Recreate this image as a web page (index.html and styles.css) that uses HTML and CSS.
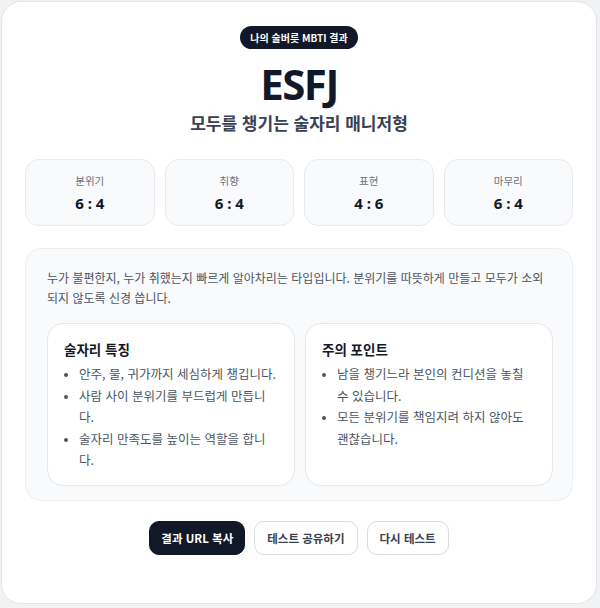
FILE: index.html
```html
<!DOCTYPE html>
<html lang="ko">
<head>
<meta charset="utf-8">
<title>나의 술버릇 MBTI 결과</title>
<link rel="stylesheet" href="styles.css">
</head>
<body>
<main class="card">
  <header class="hero">
    <span class="badge">나의 술버릇 MBTI 결과</span>
    <h1 class="type">ESFJ</h1>
    <p class="subtitle">모두를 챙기는 술자리 매니저형</p>
  </header>

  <section class="stats">
    <div class="stat"><span class="stat-label">분위기</span><span class="stat-value">6 : 4</span></div>
    <div class="stat"><span class="stat-label">취향</span><span class="stat-value">6 : 4</span></div>
    <div class="stat"><span class="stat-label">표현</span><span class="stat-value">4 : 6</span></div>
    <div class="stat"><span class="stat-label">마무리</span><span class="stat-value">6 : 4</span></div>
  </section>

  <section class="detail">
    <p class="desc">누가 불편한지, 누가 취했는지 빠르게 알아차리는 타입입니다. 분위기를 따뜻하게 만들고 모두가 소외되지 않도록 신경 씁니다.</p>
    <div class="points">
      <div class="point">
        <h2 class="point-title">술자리 특징</h2>
        <ul class="point-list">
          <li>안주, 물, 귀가까지 세심하게 챙깁니다.</li>
          <li>사람 사이 분위기를 부드럽게 만듭니다.</li>
          <li>술자리 만족도를 높이는 역할을 합니다.</li>
        </ul>
      </div>
      <div class="point">
        <h2 class="point-title">주의 포인트</h2>
        <ul class="point-list">
          <li>남을 챙기느라 본인의 컨디션을 놓칠 수 있습니다.</li>
          <li>모든 분위기를 책임지려 하지 않아도 괜찮습니다.</li>
        </ul>
      </div>
    </div>
  </section>

  <nav class="actions">
    <button class="btn btn-primary" type="button">결과 URL 복사</button>
    <button class="btn" type="button">테스트 공유하기</button>
    <button class="btn" type="button">다시 테스트</button>
  </nav>
</main>
</body>
</html>
```

FILE: styles.css
```css
* { box-sizing: border-box; }
html, body {
  margin: 0;
  padding: 0;
  background: #f1f2f4;
}
body {
  font-family: "Noto Sans CJK KR", "Noto Sans", sans-serif;
  color: #111827;
}
.card {
  width: 596px;
  height: 603px;
  margin: 1px 0 0 1px;
  background: #ffffff;
  border: 1px solid #e3e5e8;
  border-radius: 20px;
  padding: 24px 23px 0;
}
.hero {
  display: flex;
  flex-direction: column;
  align-items: center;
}
.badge {
  display: inline-block;
  background: #111827;
  color: #ffffff;
  font-size: 10px;
  font-weight: 700;
  line-height: 13px;
  padding: 5px 10px;
  border-radius: 999px;
}
.type {
  margin: 10px 0 0;
  font-family: "Noto Sans", sans-serif;
  font-size: 42px;
  font-weight: 700;
  line-height: 50px;
  letter-spacing: -1.5px;
  color: #111827;
}
.subtitle {
  margin: 2px 0 0;
  font-size: 17px;
  font-weight: 700;
  line-height: 24px;
  color: #374151;
}
.stats {
  margin-top: 24px;
  display: grid;
  grid-template-columns: repeat(4, 1fr);
  gap: 10px;
}
.stat {
  height: 67px;
  background: #f9fafb;
  border: 1px solid #e8eaed;
  border-radius: 14px;
  display: flex;
  flex-direction: column;
  align-items: center;
  justify-content: center;
  gap: 6px;
}
.stat-label {
  font-size: 10.5px;
  line-height: 14px;
  color: #6b7280;
}
.stat-value {
  font-family: "Noto Sans", sans-serif;
  font-size: 15px;
  font-weight: 700;
  line-height: 18px;
  color: #111827;
}
.detail {
  margin-top: 22px;
  background: #f9fafb;
  border: 1px solid #eceef1;
  border-radius: 16px;
  padding: 19px 19px 14px 21px;
}
.desc {
  margin: 0;
  font-size: 12px;
  line-height: 20px;
  color: #4b5563;
}
.points {
  margin-top: 15px;
  display: grid;
  grid-template-columns: 1fr 1fr;
  gap: 10px;
}
.point {
  background: #ffffff;
  border: 1px solid #e5e7eb;
  border-radius: 16px;
  padding: 15px 15px 14px 16px;
}
.point-title {
  margin: 0;
  font-size: 13.5px;
  font-weight: 700;
  line-height: 20px;
  color: #111827;
}
.point-list {
  margin: 4px 0 0;
  padding-left: 15px;
  font-size: 12.5px;
  line-height: 21.5px;
  color: #4b5563;
}
.point-list li::marker {
  font-size: 10px;
}
.actions {
  margin-top: 20px;
  display: flex;
  justify-content: center;
  gap: 9px;
}
.btn {
  height: 34px;
  padding: 0 12px;
  font-family: "Noto Sans CJK KR", "Noto Sans", sans-serif;
  font-size: 11.5px;
  font-weight: 700;
  color: #374151;
  background: #ffffff;
  border: 1px solid #d9dce1;
  border-radius: 10px;
}
.btn-primary {
  background: #111827;
  border-color: #111827;
  color: #ffffff;
  padding: 0 11px;
}
```
